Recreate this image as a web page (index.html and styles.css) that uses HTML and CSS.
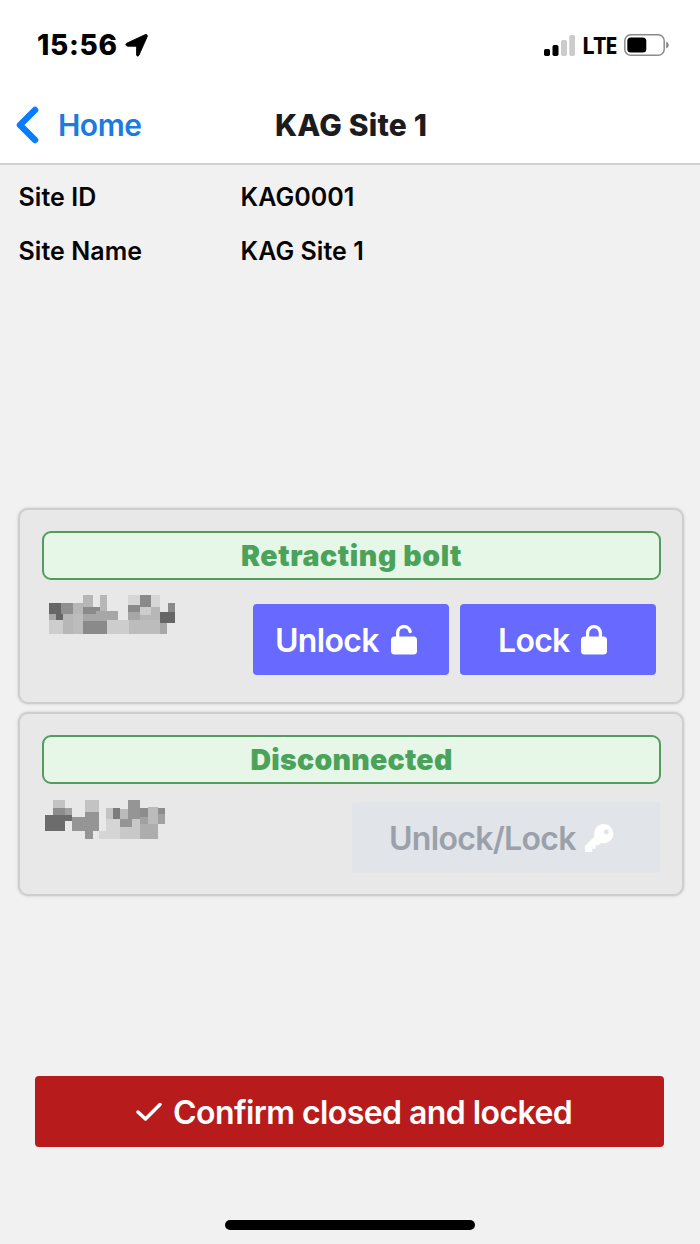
FILE: index.html
```html
<!DOCTYPE html>
<html lang="en">
<head>
<meta charset="utf-8">
<title>KAG Site 1</title>
<link rel="stylesheet" href="styles.css">
</head>
<body>
<div class="screen">
  <header class="header">
    <div class="status">
      <span class="clock">15:56</span>
      <svg class="location" viewBox="0 0 23 23"><path d="M1.500 9.300 20.300.6Q22.800 0 22.300 2.500L14 21.200Q12.600 23.500 11.500 21V12.300H2.500Q-.5 11.300 1.500 9.300Z" stroke="#000" stroke-width=".8"/></svg>
      <div class="indicators">
        <svg class="signal" viewBox="0 0 31 21"><rect y="14" width="6" height="7" rx="1.800"/><rect x="8.500" y="10" width="6" height="11" rx="1.800"/><g fill="#cbcbcb"><rect x="17" y="5" width="6" height="16" rx="1.800"/><rect x="25.300" width="5.700" height="21" rx="1.800"/></g></svg>
        <span class="network">LTE</span>
        <svg class="battery" viewBox="0 0 45 22"><rect x=".8" y=".8" width="39.400" height="20.400" rx="6" fill="none" stroke="#8b8b8b" stroke-width="1.500"/><rect x="3.300" y="3.500" width="19" height="15" rx="3.500"/><path d="M42.200 7.500q2.600 1 2.600 3.500t-2.600 3.500z" fill="#858585"/></svg>
      </div>
    </div>
    <nav class="nav">
      <a class="back"><svg class="chevron" viewBox="0 0 24 38"><path d="M19 4 4 19l15 15"/></svg><span class="home">Home</span></a>
      <h1 class="title">KAG Site 1</h1>
    </nav>
  </header>
  <dl class="details">
    <dt>Site ID</dt><dd>KAG0001</dd>
    <dt>Site Name</dt><dd>KAG Site 1</dd>
  </dl>
  <main class="cards">
    <section class="card">
      <div class="state wide"><span>Retracting bolt</span></div>
      <div class="controls">
        <svg class="mosaic" viewBox="118 286 379 116" shape-rendering="crispEdges"><path fill="#666" d="M118 308h36v34h5v19h-21v-19h-20zM453 336h43v33h-43z"/><path fill="#909090" d="M154 308h36v34h-36z"/><path fill="#b7b7b7" d="M190 308h31v34h-31zM221 286h28v34h-28zM271 286h22v46h-22zM393 344h31v18h-31zM424 321h29v41h-29zM160 342h30v60h-30z"/><path fill="#8a8a8a" d="M221 320h50v22h-50zM221 365h72v37h-72zM393 286h31v35h-31zM356 315h37v21h-37zM475 308h21v28h-21z"/><path fill="#a7a7a7" d="M118 342h20v20h-20zM221 342h38v23h-38zM259 342v-10h66v30h-32v3h-34zM356 336h37v26h-37zM453 369h21v33h-21z"/><path fill="#cdcdcd" d="M118 362h42v40h-42zM293 362h67v40h-67zM393 321h31v23h-31z"/><path fill="#d6d6d6" d="M356 286h37v29h-37zM424 286h29v35h-29z"/><path fill="#bcbcbc" d="M190 342h31v60h-31zM360 362h93v40h-93z"/></svg>
        <button class="btn unlock"><span>Unlock</span><svg class="padlock" viewBox="0 0 26 30"><rect y="11.500" width="26" height="18" rx="3.500" fill="#fff"/><path d="M6.700 13V8a6.300 6.300 0 0 1 12.500-1.300" fill="none" stroke="#fff" stroke-width="3.300" stroke-linecap="round"/></svg></button>
        <button class="btn lock"><span>Lock</span><svg class="padlock" viewBox="0 0 26 30"><rect y="11.500" width="26" height="18" rx="3.500" fill="#fff"/><path d="M6.600 13V8a6.400 6.400 0 0 1 12.800 0v5" fill="none" stroke="#fff" stroke-width="3.300"/></svg></button>
      </div>
    </section>
    <section class="card second">
      <div class="state"><span>Disconnected</span></div>
      <div class="controls">
        <svg class="mosaic b" viewBox="103 238 365 118" shape-rendering="crispEdges"><path fill="#c3c3c3" d="M127 238h36v23h-36zM225 238h42v35h-42zM289 261h20v35h-20z"/><path fill="#8d8d8d" d="M127 261h36v21h-36zM392 262h25v26h-25zM446 261h22v20h-22z"/><path fill="#a1a1a1" d="M163 261h23v21h-23zM392 288h25v24h-25zM446 281h22v31h-22z"/><path fill="#6c6c6c" d="M103 282h83v21h-23v29h-60z"/><path fill="#959595" d="M186 288h39v-15h42v59h-19v24h-23v-24h-39zM354 238h38v58h-26v24h-36v-24h24z"/><path fill="#7c7c7c" d="M309 261h21v35h-21z"/><path fill="#bbb" d="M330 264h24v32h-24zM417 258h29v54h-29z"/><path fill="#d5d5d5" d="M267 332h22v-36h41v60h-63z"/><path fill="#c8c8c8" d="M366 296h26v60h-62v-36h36z"/><path fill="#adadad" d="M392 312h54v44h-54z"/></svg>
        <button class="btn both" disabled><span>Unlock/Lock</span><svg class="key" viewBox="0 0 30 30"><path fill="#fff" fill-rule="evenodd" d="M19.500 0a10 10 0 1 1-3 19.600L14.300 22H11v3.500H7.500V29H1q-1 0-1-1v-5.500L9.900 13A10 10 0 0 1 19.500 0ZM22 5.700a2.500 2.500 0 1 0 .01 0Z"/></svg></button>
      </div>
    </section>
  </main>
  <button class="confirm"><svg class="check" viewBox="0 0 26 20"><path d="M2 10 9.500 17 24 2.500"/></svg><span>Confirm closed and locked</span></button>
  <div class="home-bar"></div>
</div>
</body>
</html>
```
FILE: styles.css
```css
* { box-sizing: border-box; }
body { margin: 0; background: #f1f1f1; font-family: Inter, "Liberation Sans", sans-serif; color: #050505; }
svg { display: block; flex: none; }
span { white-space: nowrap; }
button { border: 0; padding: 0; margin: 0; font: inherit; }
.screen { width: 700px; height: 1244px; display: flex; flex-direction: column; overflow: hidden; }
.header { height: 165px; flex: none; background: #fff; border-bottom: 2px solid #d0d0d0; }
.status { height: 90px; display: flex; align-items: center; padding: 0 31px 0 37px; }
.clock { font-size: 28px; font-weight: 800; width: 88px; letter-spacing: .7px; color: #000; }
.location { width: 23px; height: 23px; }
.indicators { margin-left: auto; display: flex; align-items: center; }
.signal { width: 31px; height: 21px; }
.network { font-family: "Noto Sans", sans-serif; font-size: 22.5px; font-weight: 700; width: 49px; padding-left: 7px; letter-spacing: -1px; }
.battery { width: 45px; height: 22px; }
.nav { height: 69px; display: grid; grid-template-columns: 258px 1fr; align-items: center; }
.back { display: flex; align-items: center; padding-left: 16px; color: #1a7be0; }
.chevron { width: 24px; height: 38px; fill: none; stroke: #0a7cff; stroke-width: 6.500; stroke-linecap: round; stroke-linejoin: round; }
.home { font-size: 30px; font-weight: 600; letter-spacing: -.5px; margin-left: 18px; }
.title { margin: 0; padding-left: 17px; font-size: 30px; font-weight: 800; letter-spacing: .2px; color: #1c1c1f; }
.details { margin: 5px 0 0; padding-left: 18.5px; display: grid; grid-template-columns: 222px 1fr; grid-auto-rows: 54px; align-items: center; font-size: 25px; font-weight: 600; letter-spacing: .05px; }
.details dd { margin: 0; }
.cards { margin: 230px 16px 0 18px; display: flex; flex-direction: column; gap: 8px; }
.card { height: 196px; padding: 21px 22px 0; border: 2px solid #cecece; border-radius: 10px; background: #e8e8e8; box-shadow: 0 0 3px #c8c8c8; }
.second { height: 184px; }
.state { height: 49px; margin-right: -1px; display: flex; align-items: center; justify-content: center; border: 2px solid #529c60; border-radius: 9px; background: #e6f7e8; color: #4ba25a; font-size: 28.5px; font-weight: 900; letter-spacing: .25px; }
.wide { letter-spacing: .6px; }
.controls { display: flex; margin-top: 15px; align-items: flex-start; }
.mosaic { width: 126px; height: 39px; margin-left: 7px; }
.b { width: 122px; margin: 1px 0 0 2px; }
.btn { height: 71px; width: 196px; display: flex; align-items: center; background: #6769ff; color: #fff; font-size: 32px; font-weight: 600; letter-spacing: -.7px; border-radius: 4px; margin-top: 9px; padding-top: 1px; }
.unlock { margin-left: 78px; padding-left: 22px; }
.unlock span { width: 116px; text-align: left; }
.lock { margin-left: 11px; padding-left: 38px; }
.lock span { width: 83px; text-align: left; }
.both { width: 308px; margin-left: 186px; margin-top: 3px; padding-left: 37px; background: #e1e4e8; color: #9aa1aa; }
.both span { width: 196px; text-align: left; }
.padlock { width: 26px; height: 30px; }
.key { width: 29px; height: 29px; }
.confirm { width: 629px; height: 71px; flex: none; margin: 180px 0 0 35px; padding: 1px 0 0 101px; border-radius: 4px; background: #b71b1c; color: #fff; display: flex; align-items: center; gap: 11px; font-size: 32px; font-weight: 600; letter-spacing: -.57px; }
.check { width: 26px; height: 20px; fill: none; stroke: #fff; stroke-width: 3.500; stroke-linecap: round; stroke-linejoin: round; }
.home-bar { width: 250px; height: 10px; border-radius: 5px; background: #000; margin: 73px 0 0 225px; flex: none; }
```
